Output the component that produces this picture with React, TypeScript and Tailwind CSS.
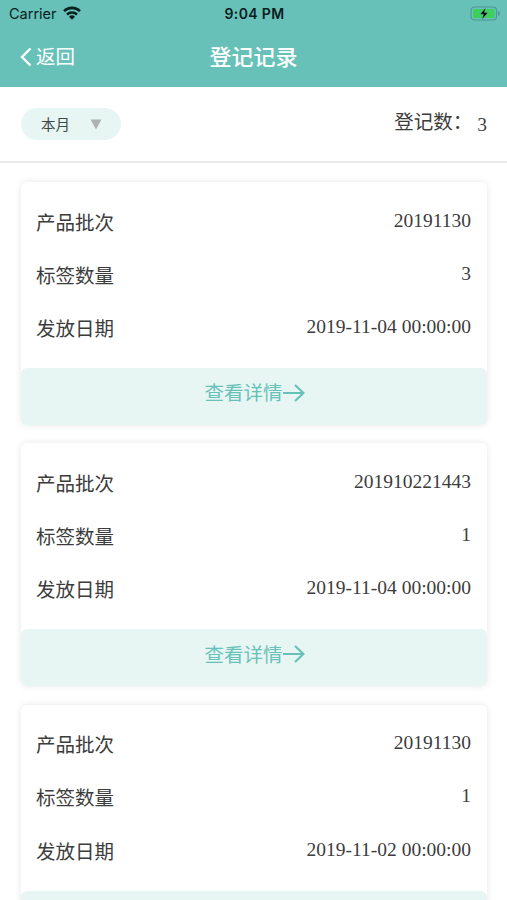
const records = [
  { id: 1, batch: "20191130", count: 3, date: "2019-11-04 00:00:00" },
  { id: 2, batch: "201910221443", count: 1, date: "2019-11-04 00:00:00" },
  { id: 3, batch: "20191130", count: 1, date: "2019-11-02 00:00:00" },
]

function StatusBar() {
  return (
    <div className="grid grid-cols-3 items-center h-7 pl-[9px] pr-[7px] text-[#08201e]">
      <div className="flex items-center gap-[6px]">
        <span className="text-[14.5px] leading-7">Carrier</span>
        <svg className="-mt-[2px]" width="18" height="14" viewBox="0 0 18 14" fill="none" stroke="currentColor" strokeWidth="2.6">
          <path d="M1 5.1a11.6 11.6 0 0 1 16 0" />
          <path d="M4 8.5a7.2 7.2 0 0 1 10 0" />
          <path d="M9 13.8 6 10.7a4.3 4.3 0 0 1 6 0z" fill="currentColor" stroke="none" />
        </svg>
      </div>
      <span className="text-center text-[14px] leading-7 font-semibold tracking-[0.35px]">9:04 PM</span>
      <svg className="justify-self-end -mt-[2px]" width="30" height="15" viewBox="0 0 30 15">
        <rect x="1" y="1" width="25.5" height="13" rx="3.5" fill="none" stroke="#4f9590" strokeWidth="1.1" />
        <rect x="3" y="3" width="21.5" height="9" rx="1.5" fill="#3bcf5b" />
        <path d="M28 5v5q2-.8 2-2.5T28 5z" fill="#4f9590" />
        <path d="M15.8 1.5 10 8.2h3.4l-1.5 5.5L18 6.6h-3.6z" fill="#000" stroke="#67c1b8" strokeWidth=".5" />
      </svg>
    </div>
  )
}

function Header() {
  return (
    <header className="h-[87px] bg-[#67c1b8]">
      <StatusBar />
      <div className="grid grid-cols-3 items-center h-[58px] px-5 text-white">
        <button className="flex items-center gap-1 text-[19.5px] text-left">
          <svg width="12" height="20" viewBox="0 0 12 20" fill="none" stroke="currentColor" strokeWidth="2.4">
            <path d="M10.5 1.5 2 10l8.5 8.5" />
          </svg>
          <span className="pt-[2px]">返回</span>
        </button>
        <h1 className="text-center text-[22px] font-medium">登记记录</h1>
      </div>
    </header>
  )
}

function Row({ label, value }: { label: string; value: string | number }) {
  return (
    <div className="flex items-center justify-between h-[53.3px] text-[19.5px] text-[#3c3c3c]">
      <span className="pt-[3px]">{label}</span>
      <span className="pb-[3px] font-['Liberation_Serif',serif]">{value}</span>
    </div>
  )
}

export default function App() {
  return (
    <div className="h-[900px] overflow-hidden bg-white font-['Inter','Noto_Sans_CJK_SC',sans-serif]">
      <Header />

      <div className="flex items-center justify-between h-[76px] pl-[21px] pr-5 border-b-2 border-[#ebebeb]">
        <button className="flex items-center justify-between w-[100px] h-8 pl-5 pr-[19px] rounded-full bg-[#e7f6f3] text-[14.5px] text-[#3c4a48]">
          <span className="pt-px">本月</span>
          <svg width="12" height="11" viewBox="0 0 12 11">
            <path d="M.5.5h11L6 10.5z" fill="#adb3b1" />
          </svg>
        </button>
        <div className="flex items-center text-[19.5px] text-[#3c3c3c]">
          <span className="pb-[3px]">登记数：</span>
          <span className="ml-[5px] pt-px font-['Liberation_Serif',serif]">3</span>
        </div>
      </div>

      <main className="flex flex-col gap-[18.3px] pl-[21px] pr-5 pt-[19px]">
        {records.map((record) => (
          <section key={record.id} className="h-[243px] rounded-[6px] bg-white shadow-[0_0_7px_rgba(0,0,0,0.1)]">
            <div className="h-[186px] pl-[15px] pr-4 pt-[13px]">
              <Row label="产品批次" value={record.batch} />
              <Row label="标签数量" value={record.count} />
              <Row label="发放日期" value={record.date} />
            </div>
            <button className="flex items-center justify-center w-full h-[57px] pb-[7px] pl-px rounded-[6px] bg-[#e7f6f3] text-[19.5px] leading-none text-[#67c1b8]">
              <span className="pt-[2px]">查看详情</span>
              <svg width="22" height="18" viewBox="0 0 22 18" fill="none" stroke="currentColor" strokeWidth="2.2">
                <path d="M0 9h20M12 1l8.5 8-8.5 8" />
              </svg>
            </button>
          </section>
        ))}
      </main>
    </div>
  )
}
